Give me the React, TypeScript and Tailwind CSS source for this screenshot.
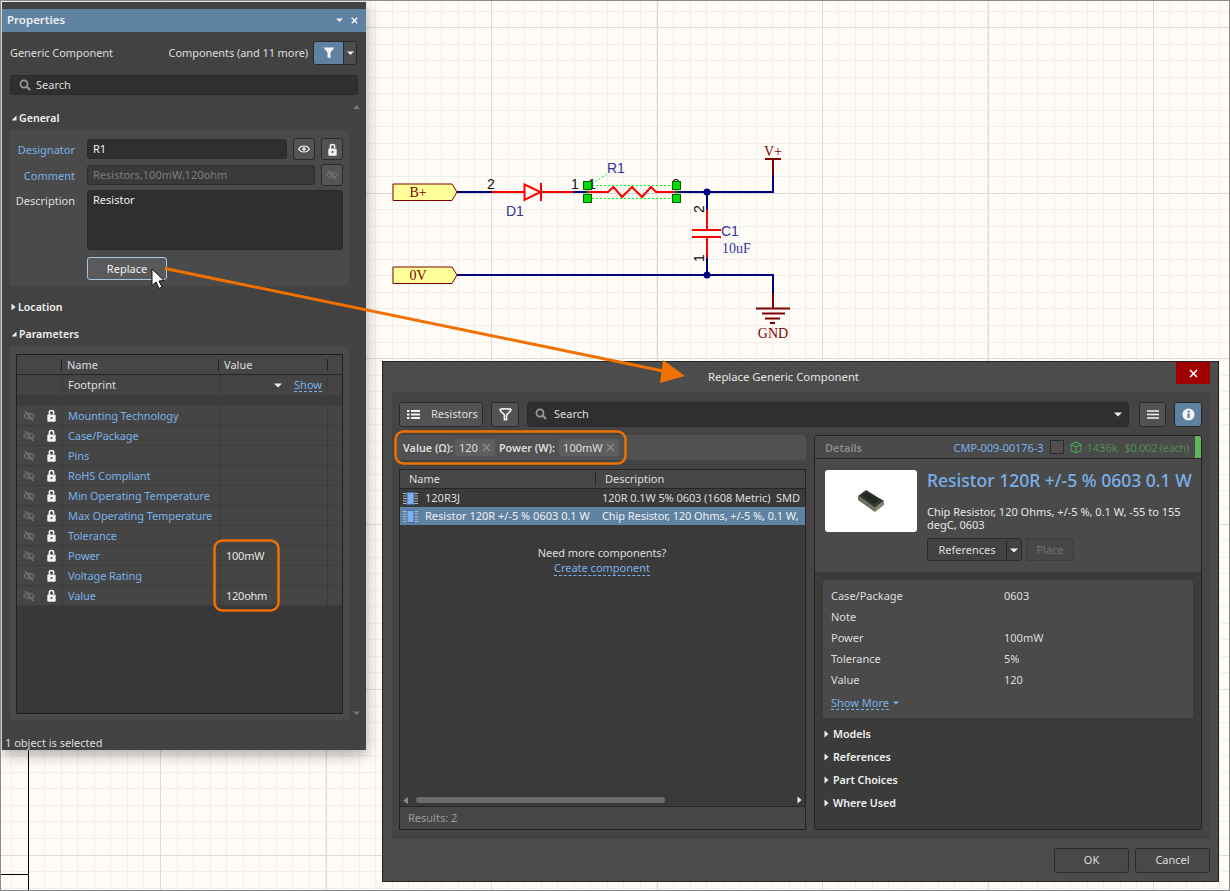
import React from "react";

const range = (start: number, step: number, end: number) => {
  const out: number[] = [];
  for (let v = start; v <= end; v += step) out.push(v);
  return out;
};

const TriRight = () => (
  <svg width="5" height="8" viewBox="0 0 5 8" className="shrink-0"><path d="M0.5 0.5 L4.5 4 L0.5 7.5 Z" fill="#f0f0f0" /></svg>
);
const TriOpen = () => (
  <svg width="6" height="6" viewBox="0 0 6 6" className="shrink-0"><path d="M5.5 0.5 L5.5 5.5 L0.5 5.5 Z" fill="#f0f0f0" /></svg>
);
const TriDown = ({ c = "#f0f0f0", w = 8 }: { c?: string; w?: number }) => (
  <svg width={w} height={w / 2 + 1} viewBox="0 0 8 5" className="shrink-0"><path d="M0 0.5 L8 0.5 L4 4.5 Z" fill={c} /></svg>
);

const Funnel = ({ size = 12 }: { size?: number }) => (
  <svg width={size} height={size} viewBox="0 0 12 12"><path d="M0.5 0.5 H11.5 L7.5 5.5 V11.5 L4.5 10 V5.5 Z" fill="#f4f4f4" /></svg>
);
const FunnelOutline = () => (
  <svg width="13" height="13" viewBox="0 0 13 13" fill="none"><path d="M1 1.5 C3 0.5 10 0.5 12 1.5 C12 4 8 5.5 7.6 7 V11.8 H5.4 V7 C5 5.5 1 4 1 1.5 Z" stroke="#f2f2f2" strokeWidth="1.6" /></svg>
);
const SearchGlyph = () => (
  <svg width="12" height="12" viewBox="0 0 12 12" fill="none" className="shrink-0"><circle cx="5" cy="5" r="3.6" stroke="#9a9a9a" strokeWidth="1.7" /><path d="M7.8 7.8 L11 11" stroke="#9a9a9a" strokeWidth="2" /></svg>
);
const Eye = () => (
  <svg width="12" height="10" viewBox="0 0 12 10" fill="none"><path d="M0.5 5 C3 1 9 1 11.5 5 C9 9 3 9 0.5 5 Z" stroke="#ededed" strokeWidth="1.2" /><circle cx="6" cy="5" r="1.7" fill="#ededed" /></svg>
);
const EyeOff = ({ c = "#6f6f6f" }: { c?: string }) => (
  <svg width="12" height="12" viewBox="0 0 12 12" fill="none"><path d="M0.7 6 C3 2.4 9 2.4 11.3 6 C9 9.6 3 9.6 0.7 6 Z" stroke={c} strokeWidth="1.3" /><circle cx="6" cy="6" r="1.6" fill={c} /><path d="M2 1 L10.5 11" stroke={c} strokeWidth="1.5" /></svg>
);
const Lock = () => (
  <svg width="9" height="13" viewBox="0 0 9 13" fill="none"><path d="M2.4 6 V3 C2.4 0.9 6.6 0.9 6.6 3 V5" stroke="#f4f4f4" strokeWidth="1.6" /><rect x="0.3" y="5.5" width="8.4" height="7.2" rx="1.2" fill="#f4f4f4" /><circle cx="4.5" cy="9" r="1" fill="#444" /></svg>
);
const Chip = () => (
  <svg width="15" height="13" viewBox="0 0 15 13" className="shrink-0">
    <rect x="4" y="0.5" width="7" height="12" fill="#7fb0ee" stroke="#3f6ea8" />
    {[1.5, 4, 6.5, 9, 11.5].map((y) => (
      <g key={y}>
        <path d={`M0 ${y} H3.5`} stroke="#b8b8b8" strokeWidth="1" />
        <path d={`M11.5 ${y} H15`} stroke="#b8b8b8" strokeWidth="1" />
      </g>
    ))}
  </svg>
);
const Lines = () => (
  <svg width="12" height="9" viewBox="0 0 12 9"><path d="M0 1 H12 M0 4.5 H12 M0 8 H12" stroke="#f4f4f4" strokeWidth="1.7" /></svg>
);
const ListIcon = () => (
  <svg width="13" height="9" viewBox="0 0 13 9"><path d="M0 1 H2.5 M4 1 H13 M0 4.5 H2.5 M4 4.5 H13 M0 8 H2.5 M4 8 H13" stroke="#f4f4f4" strokeWidth="1.8" /></svg>
);
const Info = () => (
  <svg width="13" height="13" viewBox="0 0 13 13"><circle cx="6.5" cy="6.5" r="6" fill="#f4f4f4" /><rect x="5.5" y="5.4" width="2.2" height="4.6" fill="#5f82a3" /><rect x="5.5" y="2.6" width="2.2" height="1.9" fill="#5f82a3" /></svg>
);
const Cross = ({ c = "#8b8b8b", s = 9, t = 1.2 }: { c?: string; s?: number; t?: number }) => (
  <svg width={s} height={s} viewBox="0 0 9 9"><path d="M1 1 L8 8 M8 1 L1 8" stroke={c} strokeWidth={t} /></svg>
);
const Cube = () => (
  <svg width="12" height="13" viewBox="0 0 12 13" fill="none" stroke="#4fa356" strokeWidth="1.1"><path d="M6 1 L11 3.5 V9.5 L6 12 L1 9.5 V3.5 Z M1 3.5 L6 6 L11 3.5 M6 6 V12" /></svg>
);

const IconBtn = ({ children, className = "" }: { children: React.ReactNode; className?: string }) => (
  <div className={`flex items-center justify-center rounded-[3px] border border-[#2a2a2a] ${className}`}>{children}</div>
);

const params: [string, string][] = [
  ["Mounting Technology", ""],
  ["Case/Package", ""],
  ["Pins", ""],
  ["RoHS Compliant", ""],
  ["Min Operating Temperature", ""],
  ["Max Operating Temperature", ""],
  ["Tolerance", ""],
  ["Power", "100mW"],
  ["Voltage Rating", ""],
  ["Value", "120ohm"],
];

const specs: [string, string][] = [
  ["Case/Package", "0603"],
  ["Note", ""],
  ["Power", "100mW"],
  ["Tolerance", "5%"],
  ["Value", "120"],
];

const Canvas = () => {
  const minorV = range(11, 16.55, 1230);
  const minorH = range(10.5, 16.55, 891);
  const majorV = range(160, 165.5, 1230);
  const majorH = range(27, 165.5, 891);
  const navy = "#000080";
  const red = "#ff0000";
  const maroon = "#800000";
  const port = (y: number) => `393,${y - 8} 452,${y - 8} 457,${y} 452,${y + 8.5} 393,${y + 8.5}`;
  return (
    <svg width="1230" height="891" viewBox="0 0 1230 891" className="absolute left-0 top-0">
      <rect width="1230" height="891" fill="#fffcf7" />
      <g shapeRendering="crispEdges">
        {minorV.map((x) => <path key={x} d={`M${Math.round(x) + 0.5} 0 V891`} stroke="#f1efe9" strokeWidth="1" />)}
        {minorH.map((y) => <path key={y} d={`M0 ${Math.round(y) + 0.5} H1230`} stroke="#f1efe9" strokeWidth="1" />)}
        {majorV.map((x) => <path key={x} d={`M${Math.round(x) + 0.5} 0 V891`} stroke="#dcdbd5" strokeWidth="1" />)}
        {majorH.map((y) => <path key={y} d={`M0 ${Math.round(y) + 0.5} H1230`} stroke="#dcdbd5" strokeWidth="1" />)}
        <path d="M28.5 745 V891 M0 874.5 H28" stroke="#000" strokeWidth="1" />
      </g>

      <polygon points={port(192)} fill="#ffff99" stroke={maroon} strokeWidth="1" />
      <polygon points={port(275)} fill="#ffff99" stroke={maroon} strokeWidth="1" />
      <text x="418" y="197" fontFamily="Liberation Serif, serif" fontSize="14" fill={maroon} textAnchor="middle">B+</text>
      <text x="418" y="280" fontFamily="Liberation Serif, serif" fontSize="14" fill={maroon} textAnchor="middle">0V</text>

      <g fill="none" strokeWidth="2" stroke={navy}>
        <path d="M457 192 H492 M573 192 H588 M675 192 H773 V175" />
        <path d="M707 192 V210 M707 258 V275" />
        <path d="M457 275 H773 V293" />
      </g>
      <circle cx="707" cy="192" r="3.5" fill={navy} />
      <circle cx="707" cy="275" r="3.5" fill={navy} />

      <g fill="none" strokeWidth="2" stroke={red}>
        <path d="M492 192 H524 M541 192 H573" />
        <path d="M524.5 184.5 L540.5 192 L524.5 200 Z M541 183 V201" />
        <path d="M588 192 H608 L613.5 187 L622 197 L632 187 L642 197 L651 187 L656 192 H675" />
        <path d="M707 210 V230 M692 230 H721 M692 237 H721 M707 237 V258" />
      </g>

      <g fill="none" strokeWidth="2" stroke={maroon}>
        <path d="M773 175 V159 M765 159 H781" />
        <path d="M773 293 V308 M756 308.5 H790 M762 313.5 H785 M765 318.5 H780 M770 323 H775" />
      </g>

      <g stroke="#00ff00" strokeWidth="1" strokeDasharray="2 2" fill="none">
        <path d="M588 185.5 H676 M588 198.5 H676 M592 184 L607 174" />
      </g>
      <path d="M587.5 186 V198 M676.5 186 V198" stroke="#00c000" strokeWidth="1.5" />

      <g fontFamily="Liberation Sans, sans-serif" fontSize="14">
        <text x="491" y="189" fill="#111" textAnchor="middle">2</text>
        <text x="575" y="189" fill="#111" textAnchor="middle">1</text>
        <text x="592" y="189" fill="#111" textAnchor="middle">1</text>
        <text x="672" y="189" fill="#111" textAnchor="start">2</text>
        <text x="506" y="216" fill="#333399">D1</text>
        <text x="607" y="173" fill="#333399">R1</text>
        <text x="721" y="236" fill="#333399">C1</text>
        <text transform="translate(704 213) rotate(-90)" fill="#111">2</text>
        <text transform="translate(704 262) rotate(-90)" fill="#111">1</text>
      </g>
      <text x="722" y="253" fontFamily="Liberation Serif, serif" fontSize="14" fill="#333399">10uF</text>
      <text x="773" y="156" fontFamily="Liberation Serif, serif" fontSize="14" fill={maroon} textAnchor="middle">V+</text>
      <text x="773" y="338" fontFamily="Liberation Serif, serif" fontSize="14" fill={maroon} textAnchor="middle">GND</text>

      {[[583.5, 181.5], [583.5, 194.5], [672.5, 181.5], [672.5, 194.5]].map(([x, y]) => (
        <rect key={`${x}-${y}`} x={x} y={y} width="8" height="8" fill="#00e000" stroke="#0a5a0a" strokeWidth="1" shapeRendering="crispEdges" />
      ))}
    </svg>
  );
};

const PropertiesPanel = () => (
  <div className="absolute left-[2px] top-[2px] flex h-[748px] w-[364px] flex-col bg-[#424242] text-[11px] leading-[14px] text-[#dedede] shadow-[0_4px_14px_rgba(0,0,0,0.35)]">
    <div className="h-[7px] shrink-0" />
    <div className="flex h-[23px] shrink-0 items-center justify-between bg-[#5f82a3] pl-[5px] pr-[8px]">
      <span className="pb-[1px] text-[11.5px] font-semibold text-[#f0f0f0]">Properties</span>
      <div className="flex items-center gap-[8px]">
        <TriDown w={7} />
        <Cross c="#f4f4f4" s={7} t={1.9} />
      </div>
    </div>

    <div className="mt-[9px] flex h-[24px] shrink-0 items-center pl-[8px] pr-[9px]">
      <span className="tracking-[-0.05px]">Generic Component</span>
      <span className="ml-auto tracking-[-0.08px]">Components (and 11 more)</span>
      <div className="ml-[5px] flex h-[24px] w-[44px] overflow-hidden rounded-[3px] border border-[#2a2a2a]">
        <div className="flex w-[29px] items-center justify-center bg-[#5f82a3]"><Funnel /></div>
        <div className="flex flex-1 items-center justify-center border-l border-[#2a2a2a] bg-[#4d4d4d]"><TriDown w={7} /></div>
      </div>
    </div>

    <div className="mx-[8px] mt-[10px] flex h-[20px] shrink-0 items-center gap-[5px] rounded-[3px] border border-[#2a2a2a] bg-[#2f2f2f] pl-[8px]">
      <SearchGlyph />
      <span>Search</span>
    </div>

    <div className="relative flex-1">
      <div className="absolute right-[6px] top-[10px]"><svg width="7" height="4" viewBox="0 0 7 4"><path d="M3.5 0 L7 4 H0 Z" fill="#777" /></svg></div>
      <div className="absolute bottom-[21px] right-[6px]"><TriDown c="#777" w={7} /></div>

      <div className="mt-[16px] flex h-[14px] items-center gap-[2px] pl-[9px] text-[10.6px] font-semibold text-[#f0f0f0]"><TriOpen /><span>General</span></div>

      <div className="ml-[8px] mt-[5px] flex h-[156px] w-[339px] flex-col rounded-[3px] bg-[#4a4a4a]">
        <div className="mt-[8px] flex h-[22px] items-center">
          <span className="w-[65px] pt-[1px] text-right text-[#7ab0e8]">Designator</span>
          <div className="ml-[12px] flex h-[20px] w-[200px] items-center rounded-[3px] border border-[#2a2a2a] bg-[#2f2f2f] pl-[5px] text-[#f0f0f0]">R1</div>
          <IconBtn className="ml-[6px] h-[22px] w-[22px] bg-[#535353]"><Eye /></IconBtn>
          <IconBtn className="ml-[6px] h-[22px] w-[22px] bg-[#535353]"><Lock /></IconBtn>
        </div>
        <div className="mt-[4px] flex h-[22px] items-center">
          <span className="w-[65px] pt-[1px] text-right text-[#7ab0e8]">Comment</span>
          <div className="ml-[12px] flex h-[20px] w-[228px] items-center rounded-[3px] border border-[#2e2e2e] bg-[#3a3a3a] pl-[5px] text-[#7c7c7c]">Resistors,100mW,120ohm</div>
          <IconBtn className="ml-[6px] h-[22px] w-[22px] bg-[#555555]"><EyeOff /></IconBtn>
        </div>
        <div className="mt-[4px] flex">
          <span className="mt-[4px] w-[65px] text-right">Description</span>
          <div className="ml-[12px] h-[60px] w-[256px] rounded-[3px] border border-[#2a2a2a] bg-[#2f2f2f] pl-[5px] pt-[2px] text-[#f0f0f0]">Resistor</div>
        </div>
        <div className="ml-[77px] mt-[7px] flex h-[23px] w-[80px] items-center justify-center rounded-[3px] border border-[#a4c8e8] bg-[#5a5a5a] text-[#f0f0f0]">Replace</div>
      </div>

      <div className="mt-[14px] flex h-[14px] items-center gap-[2px] pl-[9px] text-[10.6px] font-semibold text-[#f0f0f0]"><TriRight /><span>Location</span></div>
      <div className="mt-[13px] flex h-[14px] items-center gap-[2px] pl-[9px] text-[10.6px] font-semibold text-[#f0f0f0]"><TriOpen /><span>Parameters</span></div>

      <div className="ml-[8px] mt-[5px] flex h-[374px] w-[339px] flex-col rounded-[3px] bg-[#4a4a4a] pl-[6px] pt-[8px]">
        <div className="flex h-[360px] w-[327px] flex-col border border-[#1f1f1f] bg-[#383838]">
          <div className="grid h-[20px] shrink-0 grid-cols-[45px_157px_109px_1fr] items-center border-b border-[#262626] bg-[#464646]">
            <div className="h-[12px] border-r border-[#222]" />
            <div className="h-[12px] border-r border-[#222] pl-[5px] leading-[12px]">Name</div>
            <div className="h-[12px] border-r border-[#222] pl-[5px] leading-[12px]">Value</div>
            <div />
          </div>
          <div className="grid h-[20px] shrink-0 grid-cols-[45px_157px_109px_1fr] items-center bg-[#444444]">
            <div />
            <div className="flex h-full items-center border-l border-[#3a3a3a] pl-[5px]">Footprint</div>
            <div className="flex h-full items-center border-x border-[#3a3a3a] pr-[5px]">
              <div className="ml-[54px]"><TriDown w={8} /></div>
              <span className="ml-auto border-b border-dashed border-[#7ab0e8] leading-[12px] text-[#7ab0e8]">Show</span>
            </div>
            <div />
          </div>
          <div className="h-[11px] shrink-0 bg-[#3c3c3c]" />
          {params.map(([name, value]) => (
            <div key={name} className="grid h-[20px] shrink-0 grid-cols-[45px_157px_109px_1fr] items-center border-b border-[#3d3d3d] bg-[#454545]">
              <div className="flex items-center pl-[6px]">
                <EyeOff />
                <div className="ml-[12px] flex"><Lock /></div>
              </div>
              <div className="flex h-full items-center border-l border-[#3a3a3a] pl-[5px] tracking-[-0.1px] text-[#7ab0e8]">{name}</div>
              <div className="flex h-full items-center border-x border-[#3a3a3a] pl-[6px] tracking-[-0.25px] text-[#e6e6e6]">{value}</div>
              <div />
            </div>
          ))}
        </div>
      </div>
    </div>

    <div className="h-[14px] shrink-0 pl-[3px] leading-[14px] text-[#dedede]">1 object is selected</div>
  </div>
);

const ReplaceDialog = () => (
  <div className="absolute left-[382px] top-[361px] flex h-[521px] w-[837px] flex-col border border-[#222] bg-[#4c4c4c] text-[11px] leading-[14px] text-[#dedede]">
    <div className="relative flex h-[30px] shrink-0 items-center pl-[325px]">
      <span className="text-[11.3px] text-[#e4e4e4]">Replace Generic Component</span>
      <div className="absolute right-[8px] top-0 flex h-[22px] w-[34px] items-center justify-center bg-[#a00000]"><Cross c="#ffffff" s={9} t={1.6} /></div>
    </div>

    <div className="ml-[9px] flex h-[447px] w-[818px] shrink-0 flex-col bg-[#444444] pt-[10px]">
      <div className="flex h-[25px] items-center pl-[7px]">
        <div className="flex h-[25px] w-[84px] items-center gap-[11px] rounded-[3px] border border-[#2a2a2a] bg-[#535353] pb-[1px] pl-[7px]"><ListIcon /><span>Resistors</span></div>
        <IconBtn className="ml-[8px] h-[25px] w-[28px] bg-[#535353]"><FunnelOutline /></IconBtn>
        <div className="ml-[8px] flex h-[25px] w-[602px] items-center gap-[7px] rounded-[3px] border border-[#2a2a2a] bg-[#2f2f2f] pb-[1px] pl-[7px]">
          <SearchGlyph />
          <span>Search</span>
          <div className="ml-auto mr-[6px]"><TriDown w={8} /></div>
        </div>
        <IconBtn className="ml-[10px] h-[25px] w-[27px] bg-[#535353]"><Lines /></IconBtn>
        <IconBtn className="ml-[8px] h-[25px] w-[28px] bg-[#5f82a3]"><Info /></IconBtn>
      </div>

      <div className="mt-[8px] flex">
        <div className="ml-[5px] flex w-[409px] flex-col">
          <div className="flex h-[25px] items-center rounded-[4px] bg-[#515151] pl-[6px] text-[10.8px] font-semibold">
            <span>Value (Ω):</span>
            <span className="ml-[2px] flex h-[17px] w-[40px] items-center justify-between rounded-[2px] bg-[#5e5e5e] px-[4px] text-[11px] font-normal">120<Cross c="#8f8f8f" /></span>
            <span className="ml-[4px]">Power (W):</span>
            <span className="ml-[4px] flex h-[17px] w-[60px] items-center justify-between rounded-[2px] bg-[#5e5e5e] px-[4px] text-[11px] font-normal">100mW<Cross c="#8f8f8f" /></span>
          </div>

          <div className="ml-[2px] mt-[9px] flex h-[361px] w-[407px] flex-col border border-[#222] bg-[#3a3a3a]">
            <div className="grid h-[19px] shrink-0 grid-cols-[196px_1fr] items-center border-b border-[#262626] bg-[#464646]">
              <div className="h-[12px] border-r border-[#222] pl-[9px] leading-[12px]">Name</div>
              <div className="pl-[9px] leading-[12px]">Description</div>
            </div>
            <div className="grid h-[18px] shrink-0 grid-cols-[202px_1fr] items-center whitespace-nowrap">
              <div className="flex items-center gap-[7px] pl-[3px]"><Chip /><span>120R3J</span></div>
              <div className="overflow-hidden tracking-[-0.08px]">120R 0.1W 5% 0603 (1608 Metric)&nbsp; SMD</div>
            </div>
            <div className="grid h-[18px] shrink-0 grid-cols-[202px_1fr] items-center whitespace-nowrap bg-[#5f82a3] text-[#f0f0f0]">
              <div className="flex items-center gap-[7px] pl-[3px]"><Chip /><span>Resistor 120R +/-5 % 0603 0.1 W</span></div>
              <div className="overflow-hidden tracking-[-0.08px]">Chip Resistor, 120 Ohms, +/-5 %, 0.1 W,</div>
            </div>
            <div className="flex flex-col items-center pr-[1px] pt-[21px]">
              <span className="tracking-[-0.08px]">Need more components?</span>
              <span className="mt-[1px] border-b border-dashed border-[#7ab0e8] leading-[14px] text-[#7ab0e8]">Create component</span>
            </div>
            <div className="mt-auto flex h-[12px] shrink-0 items-center px-[3px]">
              <svg width="5" height="7" viewBox="0 0 5 7"><path d="M5 0 V7 L0 3.5 Z" fill="#8a8a8a" /></svg>
              <div className="ml-[8px] h-[6px] w-[249px] rounded-[3px] bg-[#6b6b6b]" />
              <div className="ml-auto"><TriRight /></div>
            </div>
            <div className="flex h-[23px] shrink-0 items-center border-t border-[#262626] bg-[#464646] pl-[8px] text-[#9a9a9a]">Results: 2</div>
          </div>
        </div>

        <div className="ml-[8px] flex h-[395px] w-[388px] flex-col overflow-hidden rounded-[3px] border border-[#222] bg-[#3b3b3b]">
          <div className="flex h-[23px] shrink-0 items-center border-b border-[#262626] bg-[#4a4a4a] pl-[10px]">
            <span className="pt-[1px] font-semibold text-[#8c8c8c]">Details</span>
            <span className="ml-auto pt-[1px] tracking-[-0.06px] text-[#7ab0e8]">CMP-009-00176-3</span>
            <div className="ml-[6px] h-[14px] w-[14px] border border-[#2a2a2a] bg-[#4f4f4f]" />
            <div className="ml-[6px]"><Cube /></div>
            <span className="ml-[5px] pt-[1px] text-[#4f8a55]">1436k</span>
            <span className="ml-[7px] pt-[1px] tracking-[-0.3px] text-[#4f8a55]">$0.002 (each)</span>
            <div className="ml-[6px] h-full w-[6px] bg-[#5cb85c]" />
          </div>

          <div className="flex h-[113px] shrink-0 bg-[#4a4a4a] pl-[10px] pt-[11px]">
            <div className="flex h-[62px] w-[92px] shrink-0 items-center justify-center rounded-[3px] bg-white">
              <svg width="28" height="24" viewBox="0 0 28 24">
                <path d="M1 7 L9 1 L27 12 L18 19 Z" fill="#34382f" />
                <path d="M1 7 L18 19 L18 23 L1 11 Z" fill="#6d6b5e" />
                <path d="M18 19 L27 12 L27 16 L18 23 Z" fill="#85836f" />
                <path d="M5 6 L10 3 L22 11 L17 15 Z" fill="#1f2a22" />
              </svg>
            </div>
            <div className="ml-[10px] flex min-w-0 flex-col">
              <div className="mt-[-1px] whitespace-nowrap text-[17.5px] font-medium leading-[22px] text-[#7ab0e8]">Resistor 120R +/-5 % 0603 0.1 W</div>
              <div className="mt-[14px] w-[262px] leading-[13px] text-[#e6e6e6]">Chip Resistor, 120 Ohms, +/-5 %, 0.1 W, -55 to 155 degC, 0603</div>
              <div className="mt-[7px] flex">
                <div className="flex h-[23px] w-[95px] items-center rounded-[3px] border border-[#2a2a2a] bg-[#424242] pt-[1px]">
                  <span className="w-[79px] border-r border-[#222] text-center leading-[18px]">References</span>
                  <div className="ml-[3px]"><TriDown w={8} /></div>
                </div>
                <div className="ml-[4px] flex h-[23px] w-[48px] items-center justify-center rounded-[3px] border border-[#3c3c3c] bg-[#474747] pt-[1px] text-[#737373]">Place</div>
              </div>
            </div>
          </div>

          <div className="mx-[8px] mt-[8px] flex h-[138px] shrink-0 flex-col rounded-[3px] bg-[#4a4a4a] pl-[8px] pt-[5px]">
            {specs.map(([k, v]) => (
              <div key={k} className="flex h-[21px] shrink-0 items-center">
                <span className="w-[173px]">{k}</span>
                <span>{v}</span>
              </div>
            ))}
            <div className="mt-[6px] flex items-center gap-[4px] text-[#7ab0e8]">
              <span className="border-b border-dashed border-[#7ab0e8] leading-[13px]">Show More</span>
              <TriDown c="#7ab0e8" w={6} />
            </div>
          </div>

          <div className="mt-[9px] flex flex-col gap-[9px] pl-[9px] text-[10.7px] font-semibold text-[#f0f0f0]">
            {["Models", "References", "Part Choices", "Where Used"].map((t) => (
              <div key={t} className="flex h-[14px] items-center gap-[4px]"><TriRight /><span>{t}</span></div>
            ))}
          </div>
        </div>
      </div>
    </div>

    <div className="flex flex-1 items-center justify-end gap-[6px] pr-[8px]">
      <div className="flex h-[25px] w-[75px] items-center justify-center rounded-[3px] border border-[#2a2a2a] bg-[#484848]">OK</div>
      <div className="flex h-[25px] w-[75px] items-center justify-center rounded-[3px] border border-[#2a2a2a] bg-[#484848]">Cancel</div>
    </div>
  </div>
);

const Overlay = () => (
  <svg width="1230" height="891" viewBox="0 0 1230 891" className="pointer-events-none absolute left-0 top-0">
    <path d="M165 268.5 L668 372" stroke="#f07000" strokeWidth="3" fill="none" />
    <polygon points="663,360 685,376 660,383" fill="#f07000" />
    <rect x="214.5" y="540.5" width="64" height="70" rx="8" fill="none" stroke="#f07000" strokeWidth="2.5" />
    <rect x="395.5" y="431.5" width="230" height="32" rx="8" fill="none" stroke="#f07000" strokeWidth="2.5" />
    <path d="M152 269 V285.5 L156 282 L159 288.5 L162 287 L159 281 L164 280.5 Z" fill="#fff" stroke="#111" strokeWidth="1" />
  </svg>
);

export default function App() {
  return (
    <div className="relative h-[891px] w-[1230px] overflow-hidden font-['Noto_Sans',sans-serif]">
      <Canvas />
      <PropertiesPanel />
      <ReplaceDialog />
      <Overlay />
      <div className="pointer-events-none absolute inset-0 border border-[#8a8a8a]" />
    </div>
  );
}
